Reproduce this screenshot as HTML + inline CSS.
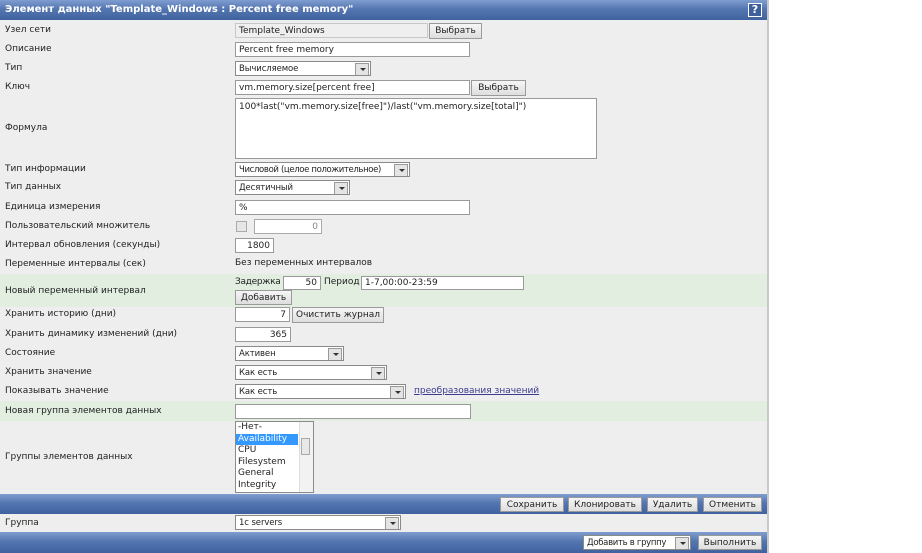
<!DOCTYPE html>
<html><head><meta charset="utf-8"><style>
*{box-sizing:border-box;margin:0;padding:0}
body{width:922px;height:553px;background:#fff;font-family:"DejaVu Sans","Liberation Sans",sans-serif;font-size:9px;color:#222;position:relative;overflow:hidden}
.p{position:absolute}
.panel{left:0;top:0;width:769px;height:553px;background:#eeeeee;border-right:2px solid #c8c8c8}
.bar{position:absolute;left:0;width:767px;background:linear-gradient(#7f9dd0,#5476b0 45%,#3f619f)}
.l{position:absolute;left:5px;line-height:12px}
.in{position:absolute;background:#fff;border:1px solid #9a9a9a;height:15px;line-height:14px;padding:0 3px;white-space:nowrap;overflow:hidden}
.r{text-align:right}
.sel{position:absolute;background:#fff;border:1px solid #8a8a8a;height:15px;line-height:14px;padding:0 3px;white-space:nowrap;overflow:hidden;font-size:8.5px;letter-spacing:-0.1px}
.sel:after{content:"";position:absolute;right:1px;top:1px;width:12px;height:11px;background:#e4e4e4;border:1px solid #9a9a9a}
.sel i{position:absolute;right:4px;top:6px;width:0;height:0;border-left:3px solid transparent;border-right:3px solid transparent;border-top:3px solid #333;z-index:2}
.btn{position:absolute;background:linear-gradient(#f6f6f6,#dedede);border:1px solid #9a9a9a;height:15px;line-height:14px;text-align:center;white-space:nowrap}
.g{position:absolute;left:0;width:767px;background:#e1eee0}
</style></head><body>
<div class="p panel"></div>
<div class="bar" style="top:0;height:20px"></div>
<div class="p" style="left:5px;top:4px;color:#fff;font-weight:bold;font-size:10px">Элемент данных "Template_Windows : Percent free memory"</div>
<div class="p" style="left:748px;top:3px;width:14px;height:14px;border:1px solid #fff;background:#3d5f9e;color:#fff;font-weight:bold;font-size:11px;line-height:12px;text-align:center">?</div>

<div class="g" style="top:274px;height:33px"></div>
<div class="g" style="top:401px;height:20px"></div>

<div class="l" style="top:24px">Узел сети</div>
<div class="in" style="left:235px;top:23px;width:193px;background:#efefef;border-color:#c8c8c8">Template_Windows</div>
<div class="btn" style="left:429px;top:23px;width:53px;height:16px">Выбрать</div>

<div class="l" style="top:43px">Описание</div>
<div class="in" style="left:235px;top:42px;width:235px">Percent free memory</div>

<div class="l" style="top:62px">Тип</div>
<div class="sel" style="left:235px;top:61px;width:136px">Вычисляемое<i></i></div>

<div class="l" style="top:81px">Ключ</div>
<div class="in" style="left:235px;top:80px;width:235px">vm.memory.size[percent free]</div>
<div class="btn" style="left:471px;top:80px;width:55px;height:16px">Выбрать</div>

<div class="l" style="top:122px">Формула</div>
<div class="in" style="left:235px;top:98px;width:362px;height:61px;padding-top:2px;line-height:12px">100*last("vm.memory.size[free]")/last("vm.memory.size[total]")</div>

<div class="l" style="top:163px">Тип информации</div>
<div class="sel" style="left:235px;top:162px;width:175px;letter-spacing:-0.35px">Числовой (целое положительное)<i></i></div>

<div class="l" style="top:181px">Тип данных</div>
<div class="sel" style="left:235px;top:180px;width:115px">Десятичный<i></i></div>

<div class="l" style="top:201px">Единица измерения</div>
<div class="in" style="left:235px;top:200px;width:235px">%</div>

<div class="l" style="top:220px">Пользовательский множитель</div>
<div class="p" style="left:236px;top:221px;width:11px;height:11px;border:1px solid #aaa;background:#e6e6e6"></div>
<div class="in r" style="left:254px;top:219px;width:68px;color:#888;border-color:#aaa">0</div>

<div class="l" style="top:239px">Интервал обновления (секунды)</div>
<div class="in r" style="left:235px;top:238px;width:39px">1800</div>

<div class="l" style="top:258px">Переменные интервалы (сек)</div>
<div class="p" style="left:235px;top:258px">Без переменных интервалов</div>

<div class="l" style="top:285px">Новый переменный интервал</div>
<div class="p" style="left:235px;top:277px;letter-spacing:-0.3px">Задержка</div>
<div class="in r" style="left:283px;top:276px;width:38px;height:14px;line-height:13px">50</div>
<div class="p" style="left:324px;top:277px">Период</div>
<div class="in" style="left:361px;top:276px;width:163px;height:14px;line-height:13px">1-7,00:00-23:59</div>
<div class="btn" style="left:235px;top:290px;width:57px">Добавить</div>

<div class="l" style="top:308px">Хранить историю (дни)</div>
<div class="in r" style="left:235px;top:307px;width:55px">7</div>
<div class="btn" style="left:292px;top:307px;width:92px;height:16px">Очистить журнал</div>

<div class="l" style="top:328px">Хранить динамику изменений (дни)</div>
<div class="in r" style="left:235px;top:327px;width:56px">365</div>

<div class="l" style="top:347px">Состояние</div>
<div class="sel" style="left:235px;top:346px;width:109px">Активен<i></i></div>

<div class="l" style="top:366px">Хранить значение</div>
<div class="sel" style="left:235px;top:365px;width:152px">Как есть<i></i></div>

<div class="l" style="top:385px">Показывать значение</div>
<div class="sel" style="left:235px;top:384px;width:171px">Как есть<i></i></div>
<div class="p" style="left:414px;top:386px;color:#3c3c90;text-decoration:underline">преобразования значений</div>

<div class="l" style="top:405px">Новая группа элементов данных</div>
<div class="in" style="left:235px;top:404px;width:236px"></div>

<div class="l" style="top:451px">Группы элементов данных</div>
<div class="p" style="left:235px;top:421px;width:79px;height:72px;background:#fff;border:1px solid #8a8a8a;line-height:11.5px">
<div style="padding-left:2px">-Нет-</div>
<div style="background:#3399ff;color:#fff;width:62px;padding-left:2px">Availability</div>
<div style="padding-left:2px">CPU</div>
<div style="padding-left:2px">Filesystem</div>
<div style="padding-left:2px">General</div>
<div style="padding-left:2px">Integrity</div>
<div class="p" style="left:63px;top:0;width:14px;height:70px;background:#f2f2f2;border-left:1px solid #ddd"></div>
<div class="p" style="left:65px;top:16px;width:9px;height:17px;background:#e8e8e8;border:1px solid #aaa"></div>
</div>

<div class="bar" style="top:494px;height:20px"></div>
<div class="btn" style="left:500px;top:497px;width:64px">Сохранить</div>
<div class="btn" style="left:568px;top:497px;width:74px">Клонировать</div>
<div class="btn" style="left:647px;top:497px;width:51px">Удалить</div>
<div class="btn" style="left:703px;top:497px;width:59px">Отменить</div>

<div class="l" style="top:517px">Группа</div>
<div class="sel" style="left:235px;top:515px;width:166px">1c servers<i></i></div>

<div class="bar" style="top:532px;height:21px"></div>
<div class="sel" style="left:583px;top:535px;width:108px;letter-spacing:-0.3px">Добавить в группу<i></i></div>
<div class="btn" style="left:698px;top:535px;width:64px">Выполнить</div>
</body></html>
